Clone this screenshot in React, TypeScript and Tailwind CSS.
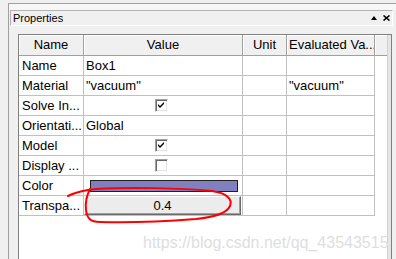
import React from 'react';

type Row = {
    name: string;
    kind: 'text' | 'check' | 'color' | 'button';
    value?: string;
    checked?: boolean;
    evaluated?: string;
};

const rows: Row[] = [
    { name: 'Name', kind: 'text', value: 'Box1' },
    { name: 'Material', kind: 'text', value: '"vacuum"', evaluated: '"vacuum"' },
    { name: 'Solve In...', kind: 'check', checked: true },
    { name: 'Orientati...', kind: 'text', value: 'Global' },
    { name: 'Model', kind: 'check', checked: true },
    { name: 'Display ...', kind: 'check', checked: false },
    { name: 'Color', kind: 'color' },
    { name: 'Transpa...', kind: 'button', value: '0.4' },
];

function CheckBox({ checked }: { checked: boolean }) {
    return (
        <div className="ml-[71px] w-[13px] h-[13px] border-t border-l border-t-[#a0a0a0] border-l-[#a0a0a0] border-b border-r border-b-white border-r-white bg-white shadow-[inset_1px_1px_0_#696969,inset_-1px_-1px_0_#e3e3e3] flex items-center justify-center">
            {checked && (
                <svg width="7" height="7" viewBox="0 0 7 7">
                    <path d="M0 2 L2 4 L6 0 L6 2 L2 6 L0 4 Z" fill="#000" />
                </svg>
            )}
        </div>
    );
}

function ValueCell({ row }: { row: Row }) {
    if (row.kind === 'check') return <CheckBox checked={!!row.checked} />;
    if (row.kind === 'color')
        return <div className="ml-[6px] w-[148px] h-[12px] border border-[#202020] bg-[#8080c0]" />;
    if (row.kind === 'button')
        return (
            <div className="w-[157px] h-[19px] bg-[#ececec] border-t border-l border-t-white border-l-white border-b border-r border-b-[#696969] border-r-[#696969] shadow-[inset_-1px_-1px_0_#a0a0a0] flex items-center justify-center">
                {row.value}
            </div>
        );
    return <span className="pl-[2px]">{row.value}</span>;
}

export default function App() {
    return (
        <div className="relative w-[396px] h-[259px] overflow-hidden bg-[#f0f0f0] font-['Liberation_Sans',Arial,sans-serif] text-[13px] text-black flex flex-col">
            <div className="h-[3px] shrink-0" />

            {/* Docked panel */}
            <div className="flex-1 ml-[8px] border-l border-t border-[#a0a0a0] flex flex-col">
                <div className="h-[6px] shrink-0 bg-[#f7f7f7]" />

                {/* Title bar */}
                <div className="ml-[1px] mr-[3px] h-[16px] border border-[#b4b4b4] border-b-white border-r-white flex items-center pl-[2px] pr-[2px] text-[11px]">
                    <span className="leading-none">Properties</span>
                    <div className="ml-auto flex items-center gap-[6px]">
                        <svg width="6" height="4" viewBox="0 0 6 4"><path d="M0 4 L3 0 L6 4 Z" fill="#000" /></svg>
                        <svg width="7" height="6" viewBox="0 0 7 6">
                            <path d="M0.5 0.5 L6.5 5.5 M6.5 0.5 L0.5 5.5" stroke="#000" strokeWidth="1.6" />
                        </svg>
                    </div>
                </div>

                {/* Property grid */}
                <div className="mt-[8px] ml-[9px] mr-[4px] flex-1 border-l border-t border-[#808080] border-r border-r-[#808080] bg-white flex">
                    <div className="flex-1 flex flex-col">
                        {/* Header */}
                        <div className="flex h-[21px] bg-[#f0f0f0]">
                            <div className="w-[65px] border-r border-b border-[#a0a0a0] shadow-[inset_1px_1px_0_#fff] flex items-center justify-center">Name</div>
                            <div className="w-[159px] border-r border-b border-[#a0a0a0] shadow-[inset_1px_1px_0_#fff] flex items-center justify-center">Value</div>
                            <div className="w-[44px] border-r border-b border-[#a0a0a0] shadow-[inset_1px_1px_0_#fff] flex items-center justify-center">Unit</div>
                            <div className="w-[88px] border-r border-b border-[#a0a0a0] shadow-[inset_1px_1px_0_#fff] flex items-center pl-[2px] whitespace-nowrap overflow-hidden">Evaluated Va...</div>
                            <div className="flex-1 border-b border-[#a0a0a0] shadow-[inset_1px_1px_0_#fff]" />
                        </div>

                        {/* Rows */}
                        {rows.map((row) => (
                            <div key={row.name} className="flex h-[20px]">
                                <div className="w-[65px] border-r border-b border-[#c0c0c0] flex items-center pl-[3px] whitespace-nowrap overflow-hidden">{row.name}</div>
                                <div className="w-[159px] border-r border-b border-[#c0c0c0] flex items-center">
                                    <ValueCell row={row} />
                                </div>
                                <div className="w-[44px] border-r border-b border-[#c0c0c0]" />
                                <div className="w-[88px] border-r border-b border-[#c0c0c0] flex items-center pl-[2px]">{row.evaluated}</div>
                            </div>
                        ))}
                    </div>
                    <div className="w-[4px] bg-[#e6e6e6] border-l border-[#d0d0d0]" />
                </div>
            </div>

            {/* Watermark */}
            <div className="absolute left-[143px] top-[231px] text-[16px] text-[#dedede] whitespace-nowrap">https://blog.csdn.net/qq_43543515</div>

            {/* Red hand-drawn mark */}
            <svg className="absolute inset-0 pointer-events-none" width="396" height="259" viewBox="0 0 396 259">
                <path
                    d="M68 196 C76 192 84 190 96 189 C130 187 180 188 212 191 C226 193 233 199 230 206 C227 213 216 217 196 219 C170 221 130 223 100 222 C90 222 87 218 86 210 C85 202 87 195 90 189"
                    fill="none"
                    stroke="#ff0000"
                    strokeWidth="2"
                    strokeLinecap="round"
                />
            </svg>
        </div>
    );
}
